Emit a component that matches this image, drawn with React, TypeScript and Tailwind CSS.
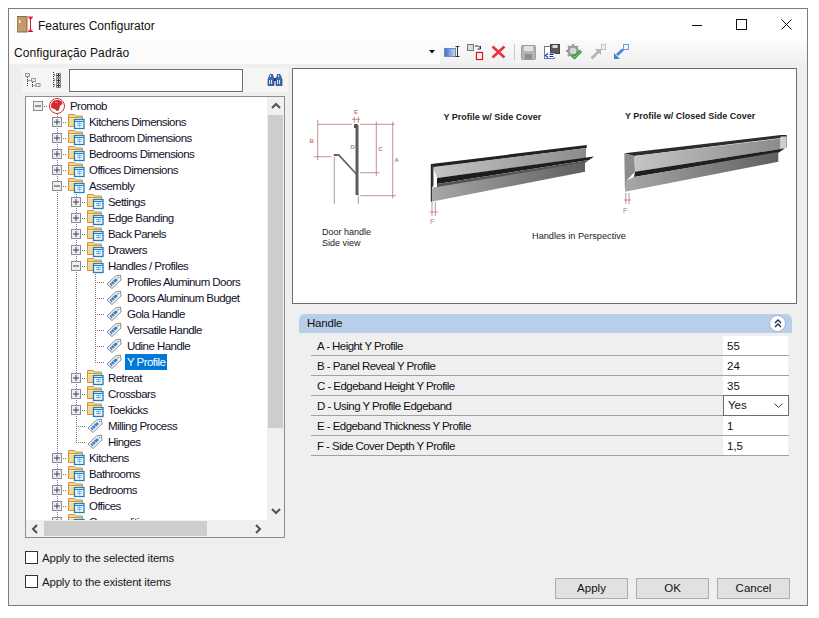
import React from 'react';

type TreeItem = {
  label: string;
  level: number;
  state?: 'plus' | 'minus';
  icon: 'logo' | 'folder' | 'tag';
  last?: boolean;
  selected?: boolean;
};

const treeItems: TreeItem[] = [
  { label: 'Promob', level: 0, state: 'minus', icon: 'logo' },
  { label: 'Kitchens Dimensions', level: 1, state: 'plus', icon: 'folder' },
  { label: 'Bathroom Dimensions', level: 1, state: 'plus', icon: 'folder' },
  { label: 'Bedrooms Dimensions', level: 1, state: 'plus', icon: 'folder' },
  { label: 'Offices Dimensions', level: 1, state: 'plus', icon: 'folder' },
  { label: 'Assembly', level: 1, state: 'minus', icon: 'folder' },
  { label: 'Settings', level: 2, state: 'plus', icon: 'folder' },
  { label: 'Edge Banding', level: 2, state: 'plus', icon: 'folder' },
  { label: 'Back Panels', level: 2, state: 'plus', icon: 'folder' },
  { label: 'Drawers', level: 2, state: 'plus', icon: 'folder' },
  { label: 'Handles / Profiles', level: 2, state: 'minus', icon: 'folder' },
  { label: 'Profiles Aluminum Doors', level: 3, icon: 'tag' },
  { label: 'Doors Aluminum Budget', level: 3, icon: 'tag' },
  { label: 'Gola Handle', level: 3, icon: 'tag' },
  { label: 'Versatile Handle', level: 3, icon: 'tag' },
  { label: 'Udine Handle', level: 3, icon: 'tag' },
  { label: 'Y Profile', level: 3, icon: 'tag', last: true, selected: true },
  { label: 'Retreat', level: 2, state: 'plus', icon: 'folder' },
  { label: 'Crossbars', level: 2, state: 'plus', icon: 'folder' },
  { label: 'Toekicks', level: 2, state: 'plus', icon: 'folder' },
  { label: 'Milling Process', level: 2, icon: 'tag' },
  { label: 'Hinges', level: 2, icon: 'tag', last: true },
  { label: 'Kitchens', level: 1, state: 'plus', icon: 'folder' },
  { label: 'Bathrooms', level: 1, state: 'plus', icon: 'folder' },
  { label: 'Bedrooms', level: 1, state: 'plus', icon: 'folder' },
  { label: 'Offices', level: 1, state: 'plus', icon: 'folder' },
  { label: 'Commodities', level: 1, state: 'plus', icon: 'folder' },
];

const properties = [
  { label: 'A - Height Y Profile', value: '55' },
  { label: 'B - Panel Reveal Y Profile', value: '24' },
  { label: 'C - Edgeband Height Y Profile', value: '35' },
  { label: 'D - Using Y Profile Edgeband', value: 'Yes', select: true },
  { label: 'E - Edgeband Thickness Y Profile', value: '1' },
  { label: 'F - Side Cover Depth Y Profile', value: '1,5' },
];

// One 19px wide column of the tree: dotted guide plus optional expander
const TreeCell = ({ guide, item }: { guide?: boolean; item?: TreeItem }) => {
  const hasLine = item && item.level > 0;
  return (
    <svg width="19" height="16" className="shrink-0 block">
      {(guide || hasLine) && (
        <line x1="9.5" y1="0" x2="9.5" y2={item?.last ? 8 : 16} stroke="#777" strokeDasharray="1 1" />
      )}
      {item && <line x1="9" y1="8.5" x2="19" y2="8.5" stroke="#777" strokeDasharray="1 1" />}
      {item?.state && (
        <g>
          <rect x="4.5" y="3.5" width="9" height="9" fill="#eeeeee" stroke="#8c8c8c" />
          <line x1="6" y1="8" x2="12" y2="8" stroke="#2f3f78" />
          {item.state === 'plus' && <line x1="9" y1="5" x2="9" y2="11" stroke="#2f3f78" />}
        </g>
      )}
    </svg>
  );
};

const FolderIcon = () => (
  <svg width="17" height="16" viewBox="0 0 17 16" className="shrink-0 block">
    <path d="M0.500 12.500V0.500h6l1 1.500h7v10.500z" fill="#f8d98c" stroke="#c9974a" />
    <path d="M1 3.500h13" stroke="#c9974a" />
    <path d="M1 4.500h13" stroke="#fdf0c4" />
    <rect x="6.500" y="5.500" width="9.500" height="9" fill="#f4f8fc" stroke="#1b80c4" strokeWidth="1.300" />
    <path d="M7 7.500h8.500" stroke="#1b80c4" />
    <path d="M9 9.500h5M11.500 8.500v4.500M9 11.500h5" stroke="#7fb2d8" />
  </svg>
);

const TagIcon = () => (
  <svg width="16" height="16" viewBox="0 0 16 16" className="shrink-0 block">
    <path d="M1 10 9.500 2 14.500 1 15 6 6 14.500z" fill="#f7f7f7" stroke="#8b8b8b" />
    <path d="M3.500 10 10 4 12 6 5.500 12.500z" fill="#3f86cc" />
    <path d="M5.500 9.500 7 11M7.500 7.500 9 9" stroke="#cfe2f5" />
    <circle cx="12.500" cy="3.500" r="0.800" fill="#777" />
  </svg>
);

const LogoIcon = () => (
  <svg width="16" height="16" viewBox="0 0 16 16" className="shrink-0 block">
    <circle cx="8" cy="8" r="7.500" fill="#fff" stroke="#d62a33" />
    <path d="M2 8C2 5 4 2 8 2c1.500 0 5 .5 5.500 3 .3 1.500-2 2-2.500 3-.5 1.500-.5 5-3 5-1.500 0-1-2-2.500-2C3.500 11 2 10 2 8z" fill="#d62a33" />
    <path d="M6 4.500c1-.5 2 0 2.500.5" stroke="#f29aa0" fill="none" />
  </svg>
);

const TreeRow = ({ item }: { item: TreeItem }) => (
  <div className="flex h-4 items-center">
    {[0, 1, 2, 3].slice(0, item.level).map((col) => (
      <TreeCell key={col} guide={col > 0} />
    ))}
    <TreeCell item={item} />
    <div className="ml-px w-4 shrink-0 flex justify-start">
      {item.icon === 'logo' && <LogoIcon />}
      {item.icon === 'folder' && <FolderIcon />}
      {item.icon === 'tag' && <TagIcon />}
    </div>
    <span
      className={`ml-[3px] px-[2px] h-4 leading-4 text-[11.5px] tracking-[-0.55px] whitespace-nowrap ${
        item.selected ? 'bg-[#0078d7] text-white' : 'text-[#10102a]'
      }`}
    >
      {item.label}
    </span>
  </div>
);

const Chevron = ({ d }: { d: string }) => (
  <svg width="10" height="8" viewBox="0 0 10 8" className="block">
    <path d={d} fill="none" stroke="#505050" strokeWidth="2" />
  </svg>
);

const ToolbarIcons = () => (
  <div className="flex items-center h-6 ml-[4px]">
    {/* rename */}
    <svg width="16" height="16" viewBox="0 0 16 16" className="block">
      <defs>
        <linearGradient id="ren" x1="0" x2="1" y1="0" y2="0">
          <stop offset="0" stopColor="#2f6fd8" />
          <stop offset="1" stopColor="#c4daf5" />
        </linearGradient>
      </defs>
      <rect x="0.500" y="4.500" width="11" height="8" fill="url(#ren)" stroke="#7a8aa0" />
      <path d="M11.500 2.500h4M13.500 2.500v10M11.500 12.500h4" stroke="#333" fill="none" />
    </svg>
    {/* move */}
    <svg width="17" height="18" viewBox="0 0 17 18" className="block ml-[7px]">
      <rect x="0.500" y="1.500" width="6" height="6" fill="#ddd" stroke="#777" />
      <path d="M8 3h3.500l2 2M13.500 3v3h-3" fill="none" stroke="#1b2a70" />
      <rect x="9.500" y="9.500" width="6" height="7" fill="#fff" stroke="#e01020" strokeWidth="1.200" />
    </svg>
    {/* delete */}
    <svg width="15" height="14" viewBox="0 0 15 14" className="block ml-[7px]">
      <path d="M1.500 1.500 13.500 12.500M13.500 1.500 1.500 12.500" stroke="#e8333a" strokeWidth="2.600" />
    </svg>
    <div className="w-px h-[16px] bg-[#c8c8c8] ml-[8px]" />
    {/* save, disabled */}
    <svg width="15" height="15" viewBox="0 0 15 15" className="block ml-[6px]">
      <rect x="0.500" y="0.500" width="14" height="14" rx="1" fill="#b4b4b4" stroke="#9c9c9c" />
      <rect x="3" y="1" width="9" height="5" fill="#e2e2e2" />
      <rect x="4" y="9" width="7" height="5" fill="#8e8e8e" />
    </svg>
    {/* save as */}
    <svg width="17" height="16" viewBox="0 0 17 16" className="block ml-[7px]">
      <rect x="1.500" y="2.500" width="10" height="12" fill="#fff" stroke="#777" />
      <rect x="7.500" y="0.500" width="9" height="9" fill="#5a5a5a" stroke="#444" />
      <rect x="9.500" y="1" width="5" height="3" fill="#ddd" />
      <path d="M2 9.500h10v4H2z" fill="#fff" />
      <path d="M5 9.500 2.500 11.500 5 13.500M6.500 10.500h4M6.500 12.500h4" fill="none" stroke="#1430d8" strokeWidth="1.200" />
    </svg>
    {/* gear with check */}
    <svg width="17" height="17" viewBox="0 0 17 17" className="block ml-[6px]">
      <circle cx="7" cy="7" r="4.500" fill="#d8d8d8" stroke="#9a9a9a" strokeWidth="2.500" />
      <path d="M7 0v3M7 11v3M0 7h3M11 7h3M2 2l2 2M12 2l-2 2M2 12l2-2" stroke="#9a9a9a" strokeWidth="2" />
      <path d="M5.500 10.500 8.500 13.500 15 7" fill="none" stroke="#1d7a3a" strokeWidth="3" />
      <path d="M5.500 10.500 8.500 13.500 15 7" fill="none" stroke="#63d24c" strokeWidth="1.400" />
    </svg>
    {/* export, disabled */}
    <svg width="16" height="16" viewBox="0 0 16 16" className="block ml-[7px]">
      <path d="M1.500 14.500 8 8" stroke="#b3b3b3" strokeWidth="2.600" />
      <path d="M5 5h6v6z" fill="#b3b3b3" />
      <rect x="11.500" y="0.500" width="4" height="5" fill="#ededed" stroke="#c4c4c4" />
    </svg>
    {/* import */}
    <svg width="16" height="16" viewBox="0 0 16 16" className="block ml-[7px]">
      <path d="M4 11 10 5.500" stroke="#3f86d8" strokeWidth="2.800" />
      <path d="M1 9v6h6z" fill="#3f86d8" />
      <rect x="10.500" y="0.500" width="5" height="5" fill="#f4f8fe" stroke="#6b9fe0" />
    </svg>
  </div>
);

const ProfilePicture = () => (
  <svg viewBox="293 69 503 234" width="503" height="234" className="block">
    <defs>
      <linearGradient id="panelA" x1="0" x2="1" y1="0" y2="0">
        <stop offset="0" stopColor="#c4c4c4" />
        <stop offset="1" stopColor="#8c8c8c" />
      </linearGradient>
      <linearGradient id="lowerA" x1="0" x2="1" y1="0" y2="0">
        <stop offset="0" stopColor="#a8a8a8" />
        <stop offset="1" stopColor="#5f5f5f" />
      </linearGradient>
    </defs>

    {/* side view dimensions */}
    <g stroke="#b87474" strokeWidth="0.800" fill="none">
      <path d="M317.700 124.300H352M360.300 124.300H394.700M317.700 120V160M313.700 156.700H331.300" />
      <path d="M376.300 121.700V176M360.300 172.700H379.300M392.700 121.700V198.300M360.300 195.700H396" />
      <path d="M354.300 116.700V122.700M358.300 116.700V122.700M352 119.300H360" />
    </g>
    <g fill="#c27878" fontFamily="'Liberation Sans', sans-serif" fontSize="6" fontWeight="700">
      <text x="354" y="114">E</text>
      <text x="309.500" y="142.500">B</text>
      <text x="350.500" y="148.500">D</text>
      <text x="378.500" y="150.500">C</text>
      <text x="394.500" y="162">A</text>
    </g>
    <path d="M333.700 155H338.700L356.300 174" fill="none" stroke="#666" strokeWidth="1.800" />
    <rect x="355.500" y="125" width="3" height="70" fill="#5c5c5c" />
    <rect x="354" y="124" width="3.500" height="4" fill="#555" />
    <path d="M334.300 157V204M358.300 195V204" stroke="#777" strokeWidth="0.700" />

    {/* profile with side cover */}
    <path d="M431.300 164 586.700 145V148L433 167.500z" fill="#222" />
    <path d="M433 167 586 148V158L437 178z" fill="url(#panelA)" />
    <path d="M437 178 594 156.500 589 160 437 184z" fill="#1c1c1c" />
    <path d="M437 184 589 160 585 163 437 189z" fill="#555" />
    <path d="M431.300 190 434 187 437 187 585 162.500V171.700L431.300 201.700z" fill="url(#lowerA)" />
    <path d="M431.300 164 433.500 165V185L431.300 190z" fill="#3a3a3a" />
    <path d="M431.300 164V201.700" stroke="#111" strokeWidth="1" />
    <path d="M432 202V216M435.300 202V216M429.500 212H438" stroke="#b87474" strokeWidth="0.800" />
    <text x="430" y="224" fill="#c27878" fontFamily="'Liberation Sans', sans-serif" fontSize="7">F</text>

    {/* profile with closed side cover */}
    <path d="M624.300 153.300 780.700 135 786.700 135V147.300L781 148V138L634 156z" fill="#2c2c2c" />
    <path d="M634 156 780.500 138.500 780.500 149 635 171.700z" fill="url(#panelA)" />
    <path d="M780.500 136.500H786.500V148L780.500 149z" fill="#cfcfcf" />
    <path d="M635 171.700 785 148.300 778 153 634 177z" fill="#1f1f1f" />
    <path d="M625 191.700 627 180 634 177 778.300 152V161.700z" fill="url(#lowerA)" />
    <path d="M624.300 153.300 634 156 635 171.700 627 180 625 191.700z" fill="#8c8c8c" />
    <path d="M625.800 193V204M629 193V204M624 200H631" stroke="#b87474" strokeWidth="0.800" />
    <text x="623" y="213" fill="#c27878" fontFamily="'Liberation Sans', sans-serif" fontSize="7.500">F</text>

    {/* captions */}
    <g fill="#222" fontFamily="'Liberation Sans', sans-serif" fontSize="9">
      <text x="322" y="235">Door handle</text>
      <text x="322" y="246">Side view</text>
      <text x="532" y="239" fontSize="9.200">Handles in Perspective</text>
    </g>
    <g fill="#222" fontFamily="'Liberation Sans', sans-serif" fontSize="9" fontWeight="700">
      <text x="443.500" y="120">Y Profile w/ Side Cover</text>
      <text x="625" y="118.500">Y Profile w/ Closed Side Cover</text>
    </g>
  </svg>
);

const Check = ({ label }: { label: string }) => (
  <label className="flex items-center h-[13px] gap-[4px]">
    <span className="w-[13px] h-[13px] border border-[#333] bg-white shrink-0" />
    <span className="text-[#1a1a1a] text-[11.5px] tracking-[-0.2px] pt-[2px]">{label}</span>
  </label>
);

const DialogButton = ({ label }: { label: string }) => (
  <button className="w-[73px] h-[21px] border border-[#adadad] bg-[#e1e1e1] text-[#111] text-[11.5px] leading-[19px]">{label}</button>
);

export default function App() {
  return (
    <div className="w-[819px] h-[618px] bg-white pt-2 pl-2 overflow-hidden text-[11.5px] font-['Liberation_Sans',sans-serif]">
      <div className="w-[800px] h-[598px] border border-[#7c7c7c] bg-[#efefef] flex flex-col">
        {/* title bar */}
        <div className="h-[31px] bg-white flex items-center shrink-0">
          <svg width="20" height="17" viewBox="0 0 20 17" className="block ml-[8px]">
            <rect x="0" y="0.500" width="10" height="15.500" fill="#c49a6c" stroke="#8d6a44" />
            <rect x="2" y="4" width="1.500" height="3" fill="#eee" />
            <path d="M11 1h5M13.500 1v14.500M11 15.500h5M12 3l1.500-2 1.500 2M12 13.500l1.500 2 1.500-2" stroke="#e01020" fill="none" />
          </svg>
          <span className="ml-px pt-[2px] text-[#111] text-[12px]">Features Configurator</span>
          <div className="ml-auto pr-[15px] flex items-center gap-[34px]">
            <svg width="10" height="10" viewBox="0 0 10 10" className="block">
              <path d="M0 5.500h10" stroke="#111" />
            </svg>
            <svg width="11" height="11" viewBox="0 0 11 11" className="block">
              <rect x="0.500" y="0.500" width="10" height="10" fill="none" stroke="#111" />
            </svg>
            <svg width="11" height="11" viewBox="0 0 11 11" className="block">
              <path d="M0.500 0.500 10.500 10.500M10.500 0.500 0.500 10.500" stroke="#111" />
            </svg>
          </div>
        </div>

        {/* toolbar */}
        <div className="h-6 flex items-stretch shrink-0 bg-gradient-to-b from-[#fbfbfb] to-[#f0f0f0]">
          <div className="w-[431px] bg-[#fbfbfb] flex items-center pl-[5px] pr-[5px] text-[#111]">
            <span className="text-[12px] tracking-[0.1px] pt-[2px]">Configuração Padrão</span>
            <svg width="6" height="4" viewBox="0 0 6 4" className="block ml-auto">
              <path d="M0 0h6L3 3.500z" fill="#111" />
            </svg>
          </div>
          <ToolbarIcons />
        </div>

        {/* main area */}
        <div className="flex-1 flex min-h-0 pt-1">
          <div className="w-[283px] shrink-0 flex flex-col">
            {/* tree search strip */}
            <div className="ml-[13px] w-[266px] h-6 bg-[#f5f5f5] rounded-t-[3px] flex items-center pl-[3px]">
              <svg width="16" height="16" viewBox="0 0 16 16" className="block">
                <path d="M2.500 5v10M2.500 8.500H7M7.500 10v5M7.500 13.500H11" stroke="#444" strokeDasharray="1 1" fill="none" />
                <rect x="0.500" y="1.500" width="4" height="3" fill="#e8e8f0" stroke="#9a9aaa" />
                <rect x="6.500" y="6.500" width="4" height="3" fill="#e8e8f0" stroke="#9a9aaa" />
                <rect x="11" y="11.500" width="4" height="3" fill="#e8e8f0" stroke="#9a9aaa" />
              </svg>
              <svg width="10" height="18" viewBox="0 0 10 18" className="block ml-[11px]">
                <path d="M1.500 1v16" stroke="#333" strokeDasharray="1 1" />
                <path d="M2 4h2M2 9h2M2 14h2" stroke="#333" strokeDasharray="1 1" />
                <path d="M4.500 2.500h4v4h-4zM4.500 7.500h4v4h-4zM4.500 12.500h4v4h-4z" fill="#e0e0e8" stroke="#7a7a8a" />
                <path d="M5 4.500h3M6.500 3v3M5 9.500h3M6.500 8v3M5 14.500h3M6.500 13v3" stroke="#333" />
              </svg>
              <input className="ml-[7px] w-[174px] h-[23px] border border-[#6f6f6f] bg-white outline-none" />
              <svg width="16" height="14" viewBox="0 0 16 14" className="block ml-[24px]">
                <path d="M1 12.500V6.500L3 1.500h2.500L7 6.500v6zM9 12.500v-6l1.500-5H13l2 5v6z" fill="#3b6db5" stroke="#1e3d70" strokeWidth="0.700" />
                <path d="M7 5h2v3H7z" fill="#1e3d70" />
                <path d="M2.500 7v4M4.500 7v4M10.500 7v4M12.500 7v4M3.500 2v2M11.500 2v2" stroke="#d6e4f6" />
              </svg>
            </div>

            {/* tree */}
            <div className="ml-[16px] mt-1 w-[260px] h-[442px] border border-[#8a8d92] bg-[#f0f0f0] grid grid-cols-[241px_17px] grid-rows-[423px_17px]">
              <div className="bg-white overflow-hidden pt-px pl-[3px]">
                {treeItems.map((item, i) => (
                  <TreeRow key={i} item={item} />
                ))}
              </div>
              <div className="flex flex-col items-center">
                <div className="h-[18px] flex items-center justify-center">
                  <Chevron d="M1 6 5 2 9 6" />
                </div>
                <div className="w-[15px] h-[313px] bg-[#cdcdcd]" />
                <div className="mt-auto h-[18px] flex items-center justify-center">
                  <Chevron d="M1 2 5 6 9 2" />
                </div>
              </div>
              <div className="flex items-center">
                <div className="w-[18px] flex justify-center">
                  <svg width="8" height="10" viewBox="0 0 8 10" className="block">
                    <path d="M6 1 2 5 6 9" fill="none" stroke="#505050" strokeWidth="2" />
                  </svg>
                </div>
                <div className="w-[163px] h-[15px] bg-[#cdcdcd]" />
                <div className="ml-auto w-[18px] flex justify-center">
                  <svg width="8" height="10" viewBox="0 0 8 10" className="block">
                    <path d="M2 1 6 5 2 9" fill="none" stroke="#505050" strokeWidth="2" />
                  </svg>
                </div>
              </div>
              <div />
            </div>

            <div className="ml-[16px] mt-[13px] flex flex-col gap-[11px]">
              <Check label="Apply to the selected items" />
              <Check label="Apply to the existent items" />
            </div>
          </div>

          <div className="flex-1 flex flex-col pb-[6px]">
            <div className="w-[505px] h-[236px] border border-[#6e6e6e] bg-white shrink-0">
              <ProfilePicture />
            </div>

            {/* property group */}
            <div className="ml-[7px] mt-[10px] w-[493px] h-[19px] rounded-t-[6px] bg-[#b8cfe9] flex items-center pl-[8px] pr-[6px] text-[#111]">
              <span className="tracking-[-0.2px]">Handle</span>
              <span className="ml-auto w-[17px] h-[17px] rounded-full bg-white border border-[#9fb3cc] flex items-center justify-center">
                <svg width="8" height="9" viewBox="0 0 8 9" className="block">
                  <path d="M1 4 4 1 7 4M1 8 4 5 7 8" fill="none" stroke="#1b2a55" strokeWidth="1.400" />
                </svg>
              </span>
            </div>
            <div className="ml-[19px] mt-[3px] w-[478px] flex flex-col">
              {properties.map((p) => (
                <div key={p.label} className="h-5 flex border-b border-[#a0a0a0] text-[#111]">
                  <span className="pl-[6px] leading-[20px] tracking-[-0.55px]">{p.label}</span>
                  {p.select ? (
                    <div className="ml-auto -mt-px w-[66px] h-[21px] border border-[#6e6e6e] bg-white flex items-center pl-[4px] pr-[5px]">
                      <span>{p.value}</span>
                      <svg width="9" height="5" viewBox="0 0 9 5" className="block ml-auto">
                        <path d="M0.500 0.500 4.500 4.500 8.500 0.500" fill="none" stroke="#444" />
                      </svg>
                    </div>
                  ) : (
                    <div className="ml-auto mr-px w-[65px] h-[19px] bg-white pl-[4px] leading-[20px]">{p.value}</div>
                  )}
                </div>
              ))}
            </div>

            <div className="mt-auto pr-[17px] flex justify-end gap-2">
              <DialogButton label="Apply" />
              <DialogButton label="OK" />
              <DialogButton label="Cancel" />
            </div>
          </div>
        </div>
      </div>
    </div>
  );
}
